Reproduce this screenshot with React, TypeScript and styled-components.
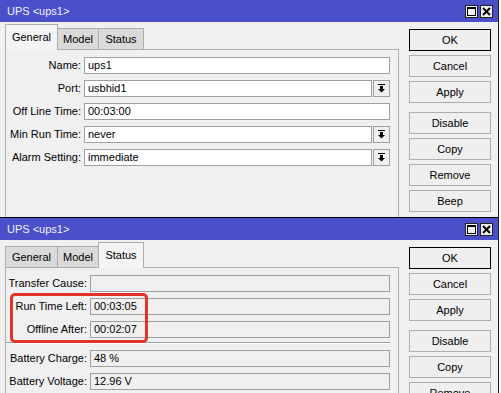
import React from "react";
import styled, { createGlobalStyle, css } from "styled-components";

const GlobalStyle = createGlobalStyle`
  html, body { margin: 0; padding: 0; background: #ffffff; overflow: hidden; }
  body { font-family: "Liberation Sans", Arial, sans-serif; font-size: 11px; color: #000; }
  #root { width: 501px; height: 393px; overflow: hidden; }
`;

const Screen = styled.div`
  display: flex;
  flex-direction: column;
  width: 501px;
  height: 393px;
  overflow: hidden;
`;

const Window = styled.div<{ $h: number }>`
  position: relative;
  box-sizing: border-box;
  flex: none;
  width: 499px;
  height: ${(p) => p.$h}px;
  background: #f0f0f0;
  border-right: 1px solid #1c1c1c;
  border-bottom: 1px solid #000;
  display: flex;
  flex-direction: column;
`;

const TitleBar = styled.div`
  flex: none;
  height: 22px;
  box-sizing: border-box;
  background: #4b4fca;
  color: #f2f2ff;
  padding: 0 5px 0 7px;
  display: flex;
  align-items: center;
  justify-content: space-between;
  font-size: 11px;
`;

const TitleButtons = styled.div`
  display: flex;
  gap: 2px;
`;

const TitleBtn = styled.div`
  width: 13px;
  height: 13px;
  box-sizing: border-box;
  background: #f0f0f0;
  border: 1px solid #202020;
  display: flex;
  align-items: center;
  justify-content: center;
`;

const Body = styled.div`
  flex: 1;
  min-height: 0;
  display: flex;
  padding: 3px 0 0 5px;
`;

const TabArea = styled.div`
  width: 394px;
  display: flex;
  flex-direction: column;
`;

const TabStrip = styled.div`
  flex: none;
  height: 25px;
  display: flex;
  align-items: flex-end;
  position: relative;
  z-index: 1;
  margin-bottom: -1px;
`;

const Tab = styled.div<{ $active?: boolean; $w: number }>`
  box-sizing: border-box;
  width: ${(p) => p.$w}px;
  margin-right: -1px;
  display: flex;
  align-items: center;
  justify-content: center;
  border: 1px solid #adadad;
  ${(p) =>
    p.$active
      ? css`
          height: 26px;
          background: #f4f4f4;
          border-bottom: none;
          padding-bottom: 2px;
        `
      : css`
          height: 22px;
          background: #dadada;
        `}
`;

const Panel = styled.div`
  flex: 1;
  border: 1px solid #adadad;
  border-bottom: none;
  background: #f0f0f0;
`;

const Form = styled.div<{ $label: number }>`
  display: grid;
  grid-template-columns: ${(p) => p.$label}px 1fr;
  column-gap: 3px;
  row-gap: 6px;
  padding: 7px 8px 0 0;
  align-items: center;
`;

const Label = styled.div`
  text-align: right;
  white-space: nowrap;
  line-height: 17px;
`;

const Field = styled.div<{ $readonly?: boolean }>`
  flex: 1;
  box-sizing: border-box;
  height: 17px;
  line-height: 15px;
  padding: 0 3px;
  border: 1px solid #a0a0a0;
  background: ${(p) => (p.$readonly ? "#f0f0f0" : "#ffffff")};
  white-space: nowrap;
  overflow: hidden;
`;

const SelectWrap = styled.div`
  display: flex;
  gap: 1px;
`;

const DropBtn = styled.div`
  flex: none;
  width: 17px;
  height: 17px;
  box-sizing: border-box;
  border: 1px solid #a0a0a0;
  background: #f0f0f0;
  display: flex;
  align-items: center;
  justify-content: center;
`;

const Separator = styled.div`
  grid-column: 1 / -1;
  height: 0;
  margin: -2px 0 0 0;
  border-top: 1px solid #a0a0a0;
  border-bottom: 1px solid #ffffff;
`;

const ButtonColumn = styled.div`
  width: 82px;
  margin-left: 10px;
  padding-top: 4px;
  display: flex;
  flex-direction: column;
  gap: 4px;
`;

const Button = styled.div<{ $default?: boolean; $sep?: boolean }>`
  flex: none;
  box-sizing: border-box;
  height: 22px;
  display: flex;
  align-items: center;
  justify-content: center;
  background: #efefef;
  border: 1px solid ${(p) => (p.$default ? "#000000" : "#adadad")};
  margin-top: ${(p) => (p.$sep ? 5 : 0)}px;
`;

const Highlight = styled.div`
  position: absolute;
  left: 10px;
  top: 75px;
  width: 138px;
  height: 50px;
  box-sizing: border-box;
  border: 3px solid #e2322c;
  border-radius: 5px;
  pointer-events: none;
`;

const DropIcon = () => (
  <svg width="9" height="9" viewBox="0 0 9 9">
    <rect x="1" y="0" width="7" height="1" fill="#000" />
    <rect x="3" y="2" width="3" height="3" fill="#000" />
    <polygon points="1,5 8,5 4.5,8.5" fill="#000" />
  </svg>
);

const MaxIcon = () => (
  <svg width="9" height="9" viewBox="0 0 9 9">
    <rect x="0.5" y="0.5" width="8" height="8" fill="none" stroke="#000" />
    <rect x="0" y="0" width="9" height="2" fill="#000" />
  </svg>
);

const CloseIcon = () => (
  <svg width="9" height="9" viewBox="0 0 9 9">
    <path d="M1 1 L8 8 M8 1 L1 8" stroke="#000" strokeWidth="2" />
  </svg>
);

const Title = () => (
  <TitleBar>
    <span>UPS &lt;ups1&gt;</span>
    <TitleButtons>
      <TitleBtn>
        <MaxIcon />
      </TitleBtn>
      <TitleBtn>
        <CloseIcon />
      </TitleBtn>
    </TitleButtons>
  </TitleBar>
);

const Tabs = ({ active }: { active: string }) => (
  <TabStrip>
    {[
      ["General", 53],
      ["Model", 42],
      ["Status", 46],
    ].map(([name, w]) => (
      <Tab key={name as string} $w={w as number} $active={active === name}>
        {name}
      </Tab>
    ))}
  </TabStrip>
);

const Buttons = ({ last }: { last: string[] }) => (
  <ButtonColumn>
    <Button $default>OK</Button>
    <Button>Cancel</Button>
    <Button>Apply</Button>
    {last.map((b, i) => (
      <Button key={b} $sep={i === 0}>
        {b}
      </Button>
    ))}
  </ButtonColumn>
);

const Select = ({ value }: { value: string }) => (
  <SelectWrap>
    <Field>{value}</Field>
    <DropBtn>
      <DropIcon />
    </DropBtn>
  </SelectWrap>
);

export default function App() {
  return (
    <Screen>
      <GlobalStyle />
      <Window $h={218}>
        <Title />
        <Body>
          <TabArea>
            <Tabs active="General" />
            <Panel>
              <Form $label={75}>
                <Label>Name:</Label>
                <Field>ups1</Field>
                <Label>Port:</Label>
                <Select value="usbhid1" />
                <Label>Off Line Time:</Label>
                <Field>00:03:00</Field>
                <Label>Min Run Time:</Label>
                <Select value="never" />
                <Label>Alarm Setting:</Label>
                <Select value="immediate" />
              </Form>
            </Panel>
          </TabArea>
          <Buttons last={["Disable", "Copy", "Remove", "Beep"]} />
        </Body>
      </Window>
      <Window $h={200}>
        <Title />
        <Body>
          <TabArea>
            <Tabs active="Status" />
            <Panel>
              <Form $label={81}>
                <Label>Transfer Cause:</Label>
                <Field $readonly></Field>
                <Label>Run Time Left:</Label>
                <Field $readonly>00:03:05</Field>
                <Label>Offline After:</Label>
                <Field $readonly>00:02:07</Field>
                <Separator />
                <Label>Battery Charge:</Label>
                <Field $readonly>48 %</Field>
                <Label>Battery Voltage:</Label>
                <Field $readonly>12.96 V</Field>
              </Form>
            </Panel>
          </TabArea>
          <Buttons last={["Disable", "Copy", "Remove", "Beep"]} />
        </Body>
        <Highlight />
      </Window>
    </Screen>
  );
}
